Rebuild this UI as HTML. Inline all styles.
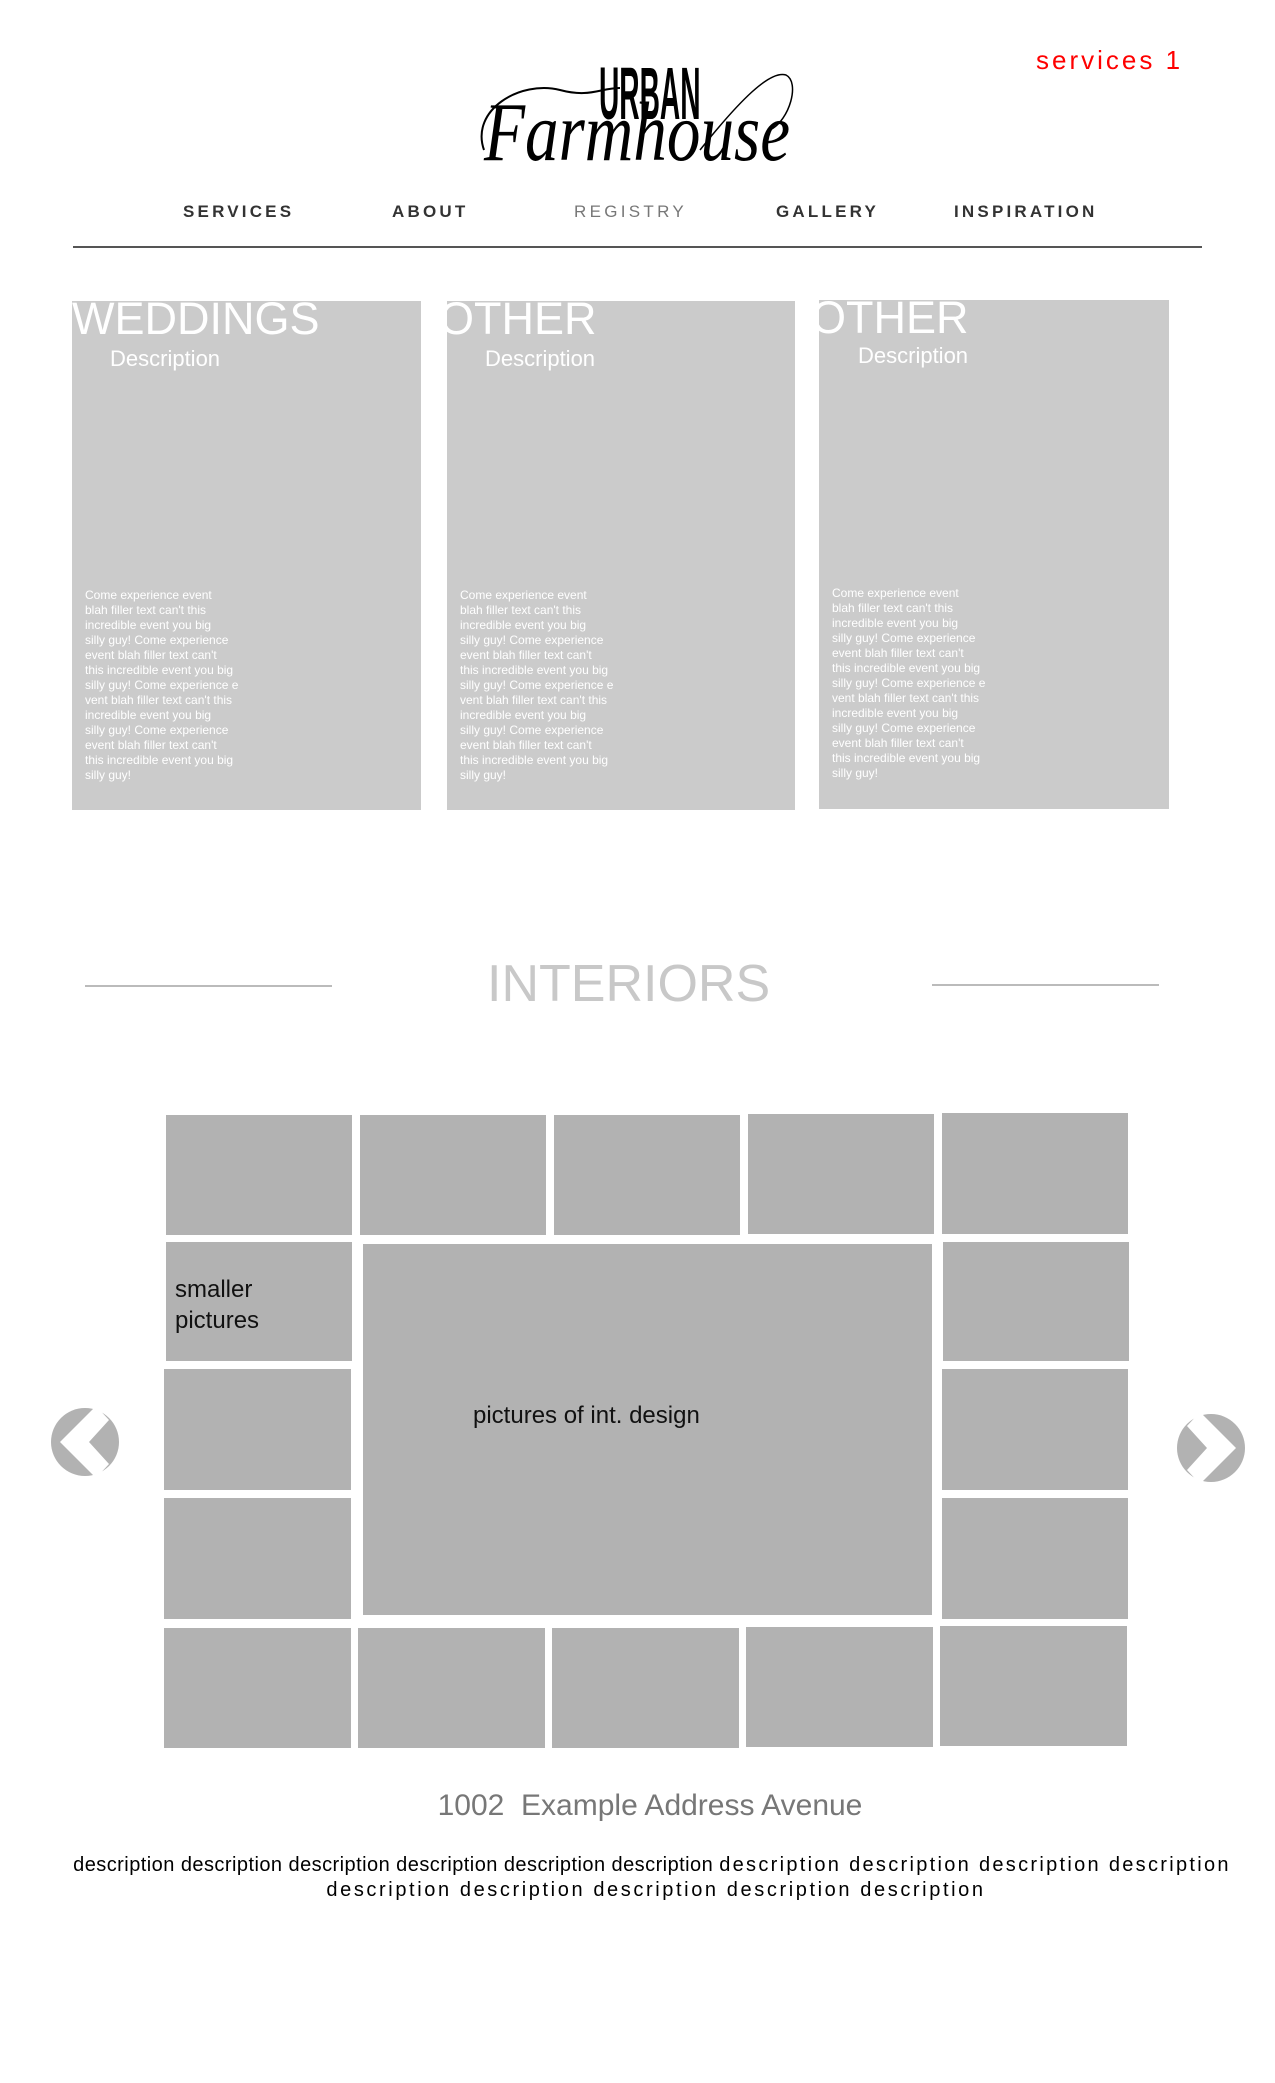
<!DOCTYPE html>
<html><head><meta charset="utf-8"><style>
*{margin:0;padding:0;box-sizing:border-box}
body{width:1275px;height:2083px;background:#fff;position:relative;overflow:hidden;font-family:"Liberation Sans",Arial,sans-serif}
.a{position:absolute;white-space:nowrap}
.nav{top:202px;font-size:17px;letter-spacing:3.2px;color:#333;font-weight:bold}
.card{position:absolute;background:#cbcbcb;overflow:hidden;height:509px;width:349px;top:301px}
.card .t{position:absolute;left:-2px;top:-8px;font-size:45px;color:#fff;white-space:nowrap}
.card .d{position:absolute;left:38px;top:45px;font-size:22px;color:#fff}
.card .b{position:absolute;left:13px;top:287px;font-size:12px;line-height:15px;color:#fff;white-space:pre}
.g{position:absolute;background:#b2b2b2}
</style></head><body>
<div class="a" style="left:1036px;top:45px;font-size:26px;color:#f00;letter-spacing:3px">services 1</div>

<svg class="a" style="left:470px;top:55px" width="350" height="120" viewBox="470 55 350 120">
<text x="599" y="119" font-family="Liberation Sans" font-weight="bold" font-size="74" transform="translate(599 0) scale(0.38 1) translate(-599 0)" fill="#000">URBAN</text>
<text x="484" y="160" font-family="Liberation Serif" font-style="italic" font-size="84" transform="translate(484 160) scale(0.8 1) translate(-484 -160)" fill="#000">Farmhouse</text>
<path d="M484 150 C470 110 520 80 560 90 C590 98 600 88 620 88" fill="none" stroke="#000" stroke-width="2"/>
<path d="M700 150 C740 100 770 70 786 75 C800 82 790 120 770 130" fill="none" stroke="#000" stroke-width="1.5"/>
</svg>

<div class="a nav" style="left:183px">SERVICES</div>
<div class="a nav" style="left:392px">ABOUT</div>
<div class="a nav" style="left:574px;color:#777;font-weight:normal;letter-spacing:3.3px">REGISTRY</div>
<div class="a nav" style="left:776px">GALLERY</div>
<div class="a nav" style="left:954px">INSPIRATION</div>
<div class="a" style="left:73px;top:246px;width:1129px;height:2px;background:#555"></div>

<div class="card" style="left:72px"><div class="t" style="left:0">WEDDINGS</div><div class="d">Description</div><div class="b">Come experience event
blah filler text can't this
incredible event you big
silly guy! Come experience
event blah filler text can't
this incredible event you big
silly guy! Come experience e
vent blah filler text can't this
incredible event you big
silly guy! Come experience
event blah filler text can't
this incredible event you big
silly guy!</div></div>
<div class="card" style="left:447px;width:348px"><div class="t" style="left:-8px">OTHER</div><div class="d">Description</div><div class="b">Come experience event
blah filler text can't this
incredible event you big
silly guy! Come experience
event blah filler text can't
this incredible event you big
silly guy! Come experience e
vent blah filler text can't this
incredible event you big
silly guy! Come experience
event blah filler text can't
this incredible event you big
silly guy!</div></div>
<div class="card" style="left:819px;top:300px;width:350px"><div class="t" style="left:-8px">OTHER</div><div class="d" style="left:39px;top:43px">Description</div><div class="b" style="top:286px">Come experience event
blah filler text can't this
incredible event you big
silly guy! Come experience
event blah filler text can't
this incredible event you big
silly guy! Come experience e
vent blah filler text can't this
incredible event you big
silly guy! Come experience
event blah filler text can't
this incredible event you big
silly guy!</div></div>

<div class="a" style="left:85px;top:985px;width:247px;height:2px;background:#bbb"></div>
<div class="a" style="left:932px;top:984px;width:227px;height:2px;background:#bbb"></div>
<div class="a" style="left:487px;top:954px;font-size:52px;color:#c8c8c8">INTERIORS</div>

<div class="g" style="left:166px;top:1115px;width:186px;height:120px"></div>
<div class="g" style="left:360px;top:1115px;width:186px;height:120px"></div>
<div class="g" style="left:554px;top:1115px;width:186px;height:120px"></div>
<div class="g" style="left:748px;top:1114px;width:186px;height:120px"></div>
<div class="g" style="left:942px;top:1113px;width:186px;height:121px"></div>
<div class="g" style="left:166px;top:1242px;width:186px;height:119px"><div style="position:absolute;left:9px;top:32px;font-size:24px;line-height:31px;color:#111">smaller<br>pictures</div></div>
<div class="g" style="left:943px;top:1242px;width:186px;height:119px"></div>
<div class="g" style="left:164px;top:1369px;width:187px;height:121px"></div>
<div class="g" style="left:942px;top:1369px;width:186px;height:121px"></div>
<div class="g" style="left:164px;top:1498px;width:187px;height:121px"></div>
<div class="g" style="left:942px;top:1498px;width:186px;height:121px"></div>
<div class="g" style="left:363px;top:1244px;width:569px;height:371px"><div style="position:absolute;left:110px;top:158px;font-size:24px;color:#111;white-space:nowrap">pictures of int. design</div></div>
<div class="g" style="left:164px;top:1628px;width:187px;height:120px"></div>
<div class="g" style="left:358px;top:1628px;width:187px;height:120px"></div>
<div class="g" style="left:552px;top:1628px;width:187px;height:120px"></div>
<div class="g" style="left:746px;top:1627px;width:187px;height:120px"></div>
<div class="g" style="left:940px;top:1626px;width:187px;height:120px"></div>

<svg class="a" style="left:40px;top:1400px" width="100" height="90" viewBox="40 1400 100 90">
<circle cx="85" cy="1442" r="34" fill="#b2b2b2"/>
<rect x="119" y="1400" width="20" height="90" fill="#fff"/>
<polygon points="96,1406 109,1420 89,1442 109,1464 96,1478 60,1442" fill="#fff"/>
</svg>
<svg class="a" style="left:1160px;top:1405px" width="100" height="90" viewBox="1160 1405 100 90">
<circle cx="1211" cy="1448" r="34" fill="#b2b2b2"/>
<rect x="1160" y="1405" width="17" height="90" fill="#fff"/>
<polygon points="1200,1412 1187,1426 1207,1448 1187,1470 1200,1484 1236,1448" fill="#fff"/>
</svg>

<div class="a" style="left:0;width:1300px;text-align:center;top:1789px;font-size:30px;color:#777">1002&nbsp; Example Address Avenue</div>
<div class="a" style="left:60px;width:1184px;text-align:center;top:1854px;font-size:20px;color:#000"><span style="letter-spacing:0.45px">description description description description description description </span><span style="letter-spacing:2.3px">description description description description</span></div>
<div class="a" style="left:0;width:1312px;text-align:center;top:1879px;font-size:20px;color:#000;letter-spacing:2.6px">description description description description description</div>
</body></html>
